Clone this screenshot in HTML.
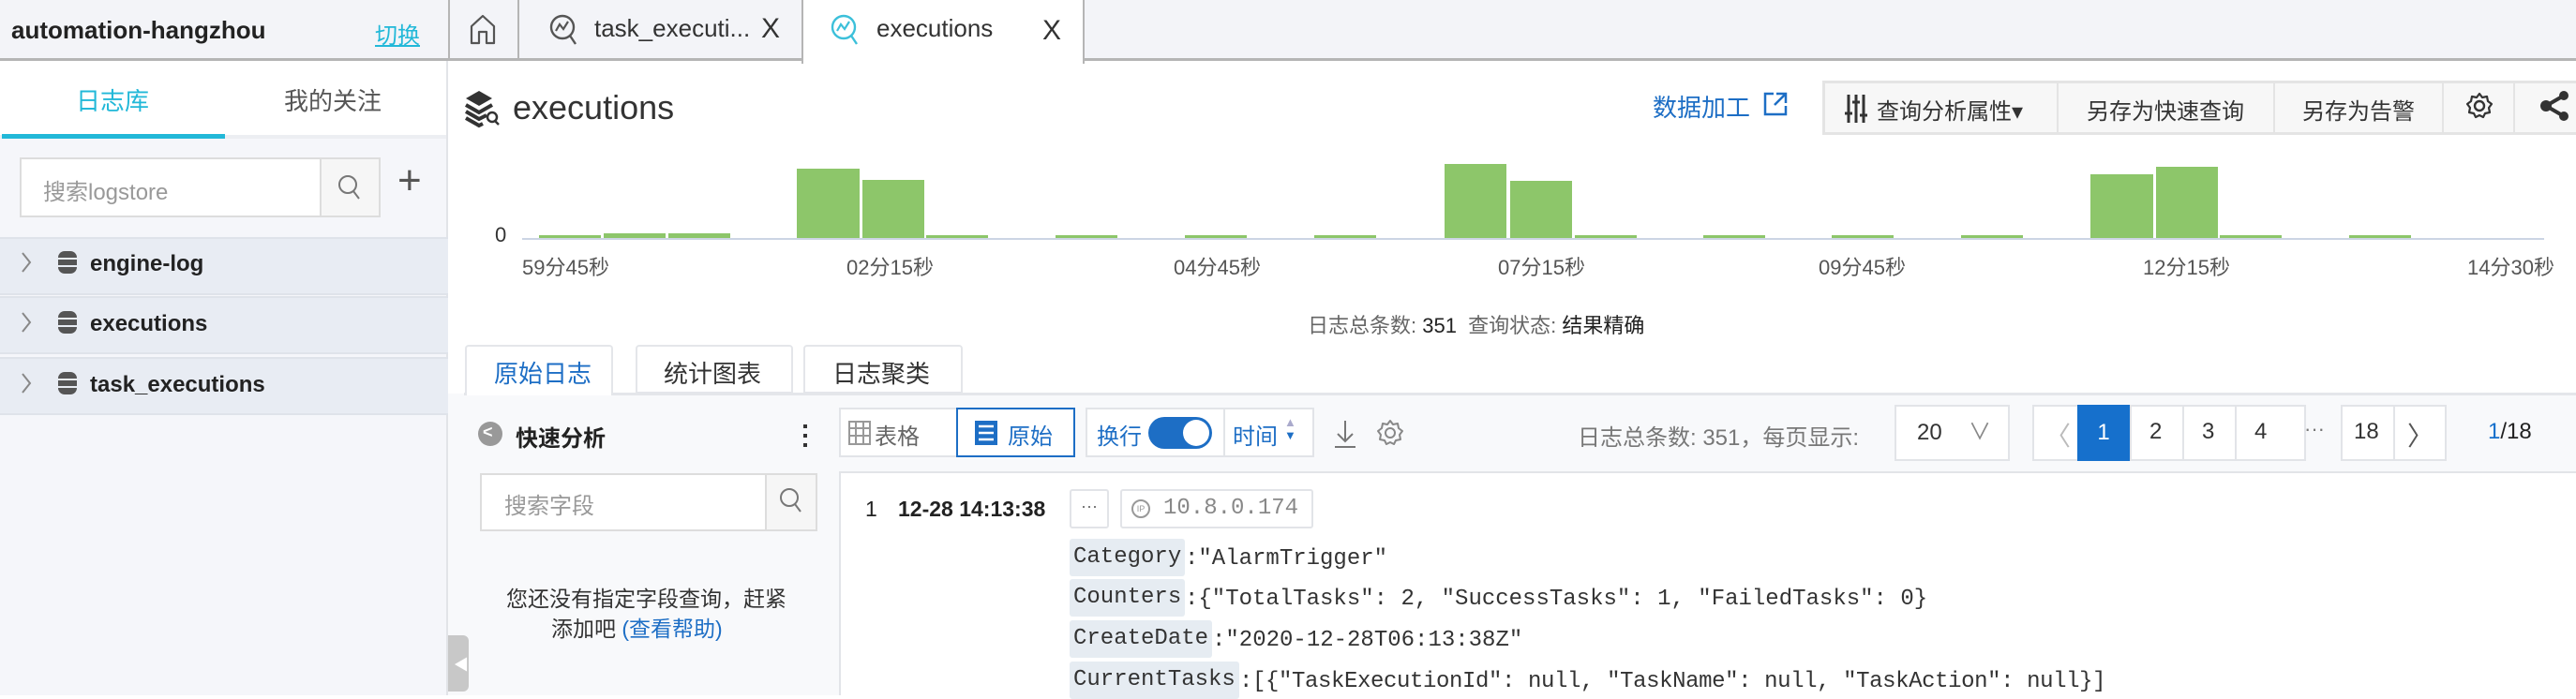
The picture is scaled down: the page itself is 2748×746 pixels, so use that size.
<!DOCTYPE html>
<html><head><meta charset="utf-8"><style>
*{box-sizing:border-box;margin:0;padding:0}
body{width:2748px;height:742px;overflow:hidden;background:#fff;font-family:"Liberation Sans","Noto Sans CJK SC",sans-serif;color:#333;position:relative}
.a{position:absolute}
.t{white-space:nowrap}
.mono{font-family:"Liberation Mono","DejaVu Sans Mono",monospace}
.bar{position:absolute;background:#8dc66a}
.row{position:absolute;left:0;width:478px;height:62px;background:#e8ecf3;border-top:2px solid #dfe3ea;border-bottom:2px solid #dfe3ea;font-size:24px;font-weight:bold;color:#222}
.lbl{position:absolute;left:1141px;height:40px;background:#e6ecf2;border-radius:3px;padding:0 4px;line-height:40px;font-size:24px;color:#333}
.pg{position:absolute;top:432px;height:60px;border:2px solid #e2e4e8;background:#fff;font-size:24px;line-height:56px;text-align:center;color:#333}
</style></head><body>
<!-- top bar -->
<div class="a" style="left:0;top:0;width:2748px;height:65px;background:#f3f4f8;border-bottom:3px solid #b5b5b5"></div>
<div class="a t" style="left:12px;top:17px;font-size:26px;font-weight:bold;color:#222">automation-hangzhou</div>
<div class="a t" style="left:400px;top:18px;font-size:24px;color:#22b8d8;text-decoration:underline">切换</div>
<div class="a" style="left:478px;top:0;width:2px;height:65px;background:#b5b5b5"></div>
<svg class="a" style="left:500px;top:14px" width="30" height="34" viewBox="0 0 30 34"><path d="M3 32V14L15 3l12 11v18h-8V20h-8v12z" fill="none" stroke="#555" stroke-width="2.2" stroke-linejoin="round"/></svg>
<div class="a" style="left:552px;top:0;width:2px;height:65px;background:#b5b5b5"></div>
<svg class="a" style="left:585px;top:14px" width="34" height="38" viewBox="0 0 34 38"><circle cx="15" cy="15" r="12" fill="none" stroke="#555" stroke-width="2.4"/><path d="M8 19l4-7 4 5 5-8" fill="none" stroke="#555" stroke-width="2.2"/><path d="M23 24l6 9" stroke="#555" stroke-width="2.4"/></svg>
<div class="a t" style="left:634px;top:15px;font-size:26px;color:#333">task_executi...</div>
<div class="a t" style="left:812px;top:14px;font-size:30px;color:#333">X</div>
<div class="a" style="left:855px;top:0;width:302px;height:68px;background:#fff;border-left:2px solid #b5b5b5;border-right:2px solid #b5b5b5"></div>
<svg class="a" style="left:885px;top:14px" width="34" height="38" viewBox="0 0 34 38"><circle cx="15" cy="15" r="12" fill="none" stroke="#3cc0da" stroke-width="2.4"/><path d="M8 19l4-7 4 5 5-8" fill="none" stroke="#3cc0da" stroke-width="2.2"/><path d="M23 24l6 9" stroke="#3cc0da" stroke-width="2.4"/></svg>
<div class="a t" style="left:935px;top:15px;font-size:26px;color:#333">executions</div>
<div class="a t" style="left:1112px;top:16px;font-size:30px;color:#333">X</div>
<!-- sidebar -->
<div class="a" style="left:0;top:65px;width:478px;height:677px;background:#f5f6fa;border-right:2px solid #e2e4e8"></div>
<div class="a" style="left:0;top:65px;width:476px;height:83px;background:#fff;border-bottom:4px solid #eceef2"></div>
<div class="a t" style="left:81px;top:88px;font-size:26px;color:#22b8d8">日志库</div>
<div class="a t" style="left:303px;top:88px;font-size:26px;color:#555">我的关注</div>
<div class="a" style="left:2px;top:143px;width:238px;height:5px;background:#22b8d8"></div>
<div class="a" style="left:21px;top:168px;width:385px;height:64px;border:2px solid #ddd;background:#fff"></div>
<div class="a" style="left:341px;top:168px;width:65px;height:64px;border:2px solid #ddd;background:#f6f6f6"></div>
<div class="a t" style="left:46px;top:185px;font-size:24px;color:#999">搜索logstore</div>
<svg class="a" style="left:358px;top:184px" width="30" height="32" viewBox="0 0 30 32"><circle cx="13" cy="13" r="9" fill="none" stroke="#777" stroke-width="2"/><path d="M19 20l6 8" stroke="#777" stroke-width="2"/></svg>
<div class="a t" style="left:424px;top:168px;font-size:44px;color:#555;font-weight:300">+</div>
<div class="row" style="top:253px"></div>
<div class="row" style="top:316px"></div>
<div class="row" style="top:381px"></div>
<div class="a t" style="left:96px;top:268px;font-size:24px;font-weight:bold;color:#222">engine-log</div>
<div class="a t" style="left:96px;top:332px;font-size:24px;font-weight:bold;color:#222">executions</div>
<div class="a t" style="left:96px;top:397px;font-size:24px;font-weight:bold;color:#222">task_executions</div>
<svg class="a" style="left:20px;top:268px" width="80" height="160" viewBox="0 0 80 160">
<g fill="none" stroke="#888" stroke-width="2"><path d="M4 2l8 10-8 10"/><path d="M4 66l8 10-8 10"/><path d="M4 131l8 10-8 10"/></g>
<g fill="#555"><rect x="42" y="0" width="20" height="24" rx="7"/><rect x="42" y="64" width="20" height="24" rx="7"/><rect x="42" y="129" width="20" height="24" rx="7"/></g>
<g stroke="#e8ecf3" stroke-width="2"><path d="M42 8h20M42 16h20M42 72h20M42 80h20M42 137h20M42 145h20"/></g></svg>
<!-- main header -->
<svg class="a" style="left:495px;top:95px" width="40" height="42" viewBox="0 0 40 42"><path d="M16 2l14 8-14 8-14-8z" fill="#333"/><path d="M2 17l14 8 14-8M2 24l14 8 8-4M2 31l14 8 4-2" fill="none" stroke="#333" stroke-width="4"/><circle cx="30" cy="30" r="5" fill="none" stroke="#333" stroke-width="2.5"/><path d="M33 34l4 4" stroke="#333" stroke-width="2.5"/></svg>
<div class="a t" style="left:547px;top:94px;font-size:36px;color:#333">executions</div>
<div class="a t" style="left:1763px;top:95px;font-size:26px;color:#1d6ec5">数据加工</div>
<svg class="a" style="left:1880px;top:97px" width="28" height="28" viewBox="0 0 28 28"><path d="M12 3H3v22h22v-9" fill="none" stroke="#1d6ec5" stroke-width="2.5"/><path d="M15 3h10v10M25 3L13 15" fill="none" stroke="#1d6ec5" stroke-width="2.5"/></svg>
<div class="a" style="left:1944px;top:86px;width:810px;height:58px;border:3px solid #e4e4e4;background:#f7f7f7"></div>
<div class="a" style="left:2194px;top:86px;width:2px;height:58px;background:#e4e4e4"></div>
<div class="a" style="left:2425px;top:86px;width:2px;height:58px;background:#e4e4e4"></div>
<div class="a" style="left:2605px;top:86px;width:2px;height:58px;background:#e4e4e4"></div>
<div class="a" style="left:2681px;top:86px;width:2px;height:58px;background:#e4e4e4"></div>
<svg class="a" style="left:1968px;top:99px" width="24" height="34" viewBox="0 0 24 34"><g stroke="#333" stroke-width="3"><path d="M4 2v30M12 2v30M20 2v30"/><path d="M0 22h8M8 10h8M16 24h8"/></g></svg>
<div class="a t" style="left:2002px;top:99px;font-size:24px;color:#333">查询分析属性▾</div>
<div class="a t" style="left:2226px;top:99px;font-size:24px;color:#333">另存为快速查询</div>
<div class="a t" style="left:2456px;top:99px;font-size:24px;color:#333">另存为告警</div>
<svg class="a" style="left:2630px;top:98px" width="30" height="30" viewBox="0 0 30 30"><circle cx="15" cy="15" r="5" fill="none" stroke="#333" stroke-width="2.4"/><path d="M15 2l3 4 5-1 1 5 4 3-3 4 1 5-5 1-2 4-4-2-4 2-2-4-5-1 1-5-3-4 4-3 1-5 5 1z" fill="none" stroke="#333" stroke-width="2.2" stroke-linejoin="round"/></svg>
<svg class="a" style="left:2708px;top:96px" width="34" height="34" viewBox="0 0 34 34"><circle cx="27" cy="6" r="5" fill="#333"/><circle cx="8" cy="17" r="6" fill="#333"/><circle cx="27" cy="28" r="5" fill="#333"/><path d="M27 6L8 17l19 11" fill="none" stroke="#333" stroke-width="4"/></svg>
<!-- chart -->
<div class="a t" style="left:528px;top:238px;font-size:22px;color:#333">0</div>
<div class="a" style="left:557px;top:254px;width:2157px;height:2px;background:#ccd5e4"></div>
<div class="bar" style="left:575px;top:251px;width:66px;height:3px"></div>
<div class="bar" style="left:644px;top:249px;width:66px;height:5px"></div>
<div class="bar" style="left:713px;top:249px;width:66px;height:5px"></div>
<div class="bar" style="left:850px;top:180px;width:67px;height:74px"></div>
<div class="bar" style="left:920px;top:192px;width:66px;height:62px"></div>
<div class="bar" style="left:988px;top:251px;width:66px;height:3px"></div>
<div class="bar" style="left:1126px;top:251px;width:66px;height:3px"></div>
<div class="bar" style="left:1264px;top:251px;width:66px;height:3px"></div>
<div class="bar" style="left:1402px;top:251px;width:66px;height:3px"></div>
<div class="bar" style="left:1541px;top:175px;width:66px;height:79px"></div>
<div class="bar" style="left:1611px;top:193px;width:66px;height:61px"></div>
<div class="bar" style="left:1680px;top:251px;width:66px;height:3px"></div>
<div class="bar" style="left:1817px;top:251px;width:66px;height:3px"></div>
<div class="bar" style="left:1954px;top:251px;width:66px;height:3px"></div>
<div class="bar" style="left:2092px;top:251px;width:66px;height:3px"></div>
<div class="bar" style="left:2230px;top:186px;width:67px;height:68px"></div>
<div class="bar" style="left:2300px;top:178px;width:66px;height:76px"></div>
<div class="bar" style="left:2368px;top:251px;width:66px;height:3px"></div>
<div class="bar" style="left:2506px;top:251px;width:66px;height:3px"></div>
<div class="a t" style="left:557px;top:268px;font-size:22px;color:#555">59分45秒</div>
<div class="a t" style="left:903px;top:268px;font-size:22px;color:#555">02分15秒</div>
<div class="a t" style="left:1252px;top:268px;font-size:22px;color:#555">04分45秒</div>
<div class="a t" style="left:1598px;top:268px;font-size:22px;color:#555">07分15秒</div>
<div class="a t" style="left:1940px;top:268px;font-size:22px;color:#555">09分45秒</div>
<div class="a t" style="left:2286px;top:268px;font-size:22px;color:#555">12分15秒</div>
<div class="a t" style="left:2632px;top:268px;font-size:22px;color:#555">14分30秒</div>
<div class="a t" style="left:1395px;top:330px;font-size:22px;color:#666">日志总条数: <span style="color:#222">351</span>&nbsp; 查询状态: <span style="color:#222">结果精确</span></div>
<!-- tabs -->
<div class="a" style="left:478px;top:420px;width:2270px;height:322px;background:#f8f9fb"></div>
<div class="a" style="left:495px;top:419px;width:2253px;height:3px;background:#e4e6ea"></div>
<div class="a" style="left:496px;top:368px;width:158px;height:54px;background:#fff;border:2px solid #e4e6ea;border-bottom:none;border-radius:4px 4px 0 0"></div>
<div class="a" style="left:678px;top:368px;width:168px;height:52px;background:#fff;border:2px solid #e4e6ea;border-radius:4px 4px 0 0"></div>
<div class="a" style="left:857px;top:368px;width:170px;height:52px;background:#fff;border:2px solid #e4e6ea;border-radius:4px 4px 0 0"></div>
<div class="a t" style="left:527px;top:379px;font-size:26px;color:#1d6ec5">原始日志</div>
<div class="a t" style="left:708px;top:379px;font-size:26px;color:#333">统计图表</div>
<div class="a t" style="left:888px;top:379px;font-size:26px;color:#333">日志聚类</div>
<!-- quick analysis -->
<div class="a" style="left:478px;top:678px;width:22px;height:60px;background:#c8c8c8;border-radius:0 6px 6px 0"></div>
<div class="a t" style="left:484px;top:696px;font-size:16px;color:#fff">◀</div>
<div class="a" style="left:510px;top:450px;width:26px;height:26px;border-radius:50%;background:#999"></div>
<div class="a t" style="left:515px;top:451px;font-size:18px;color:#fff;font-weight:bold">&lt;</div>
<div class="a t" style="left:550px;top:448px;font-size:24px;font-weight:bold;color:#222">快速分析</div>
<div class="a" style="left:857px;top:453px;width:4px;height:4px;background:#333;box-shadow:0 10px #333,0 20px #333"></div>
<div class="a" style="left:512px;top:505px;width:360px;height:62px;border:2px solid #ddd;background:#fff"></div>
<div class="a" style="left:816px;top:505px;width:56px;height:62px;border:2px solid #ddd;background:#f6f6f6"></div>
<div class="a t" style="left:538px;top:520px;font-size:24px;color:#999">搜索字段</div>
<svg class="a" style="left:829px;top:518px" width="30" height="32" viewBox="0 0 30 32"><circle cx="13" cy="13" r="9" fill="none" stroke="#777" stroke-width="2"/><path d="M19 20l6 8" stroke="#777" stroke-width="2"/></svg>
<div class="a t" style="left:540px;top:620px;font-size:23px;color:#333">您还没有指定字段查询，赶紧</div>
<div class="a t" style="left:588px;top:652px;font-size:23px;color:#333">添加吧 <span style="color:#1d6ec5">(查看帮助)</span></div>
<!-- toolbar -->
<div class="a" style="left:895px;top:435px;width:252px;height:53px;border:2px solid #e2e4e8;background:#fff"></div>
<div class="a" style="left:1020px;top:435px;width:127px;height:53px;border:2px solid #1d6ec5;background:#fff"></div>
<svg class="a" style="left:905px;top:449px" width="24" height="26" viewBox="0 0 24 26"><rect x="1" y="1" width="22" height="24" fill="none" stroke="#999" stroke-width="2"/><path d="M1 8h22M1 16h22M8 1v24M16 1v24" stroke="#999" stroke-width="2"/></svg>
<div class="a t" style="left:933px;top:446px;font-size:24px;color:#666">表格</div>
<svg class="a" style="left:1040px;top:449px" width="24" height="26" viewBox="0 0 24 26"><rect width="24" height="26" fill="#1d6ec5"/><path d="M4 6h16M4 13h16M4 20h16" stroke="#fff" stroke-width="2.5"/></svg>
<div class="a t" style="left:1075px;top:446px;font-size:24px;color:#1d6ec5">原始</div>
<div class="a" style="left:1158px;top:435px;width:244px;height:53px;border:2px solid #e2e4e8;background:#fff"></div>
<div class="a" style="left:1305px;top:435px;width:2px;height:53px;background:#e2e4e8"></div>
<div class="a t" style="left:1170px;top:446px;font-size:24px;color:#1d6ec5">换行</div>
<div class="a" style="left:1225px;top:445px;width:68px;height:34px;border-radius:17px;background:#1d6ec5"></div>
<div class="a" style="left:1262px;top:448px;width:28px;height:28px;border-radius:50%;background:#fff"></div>
<div class="a t" style="left:1315px;top:446px;font-size:24px;color:#1d6ec5">时间</div>
<div class="a t" style="left:1370px;top:444px;font-size:13px;line-height:14px;color:#1d6ec5"><span style="color:#aac">▲</span><br>▼</div>
<svg class="a" style="left:1422px;top:447px" width="26" height="32" viewBox="0 0 26 32"><path d="M13 2v22M5 16l8 8 8-8M2 30h22" fill="none" stroke="#777" stroke-width="2"/></svg>
<svg class="a" style="left:1468px;top:447px" width="30" height="30" viewBox="0 0 30 30"><circle cx="15" cy="15" r="5" fill="none" stroke="#888" stroke-width="2"/><path d="M15 2l3 4 5-1 1 5 4 3-3 4 1 5-5 1-2 4-4-2-4 2-2-4-5-1 1-5-3-4 4-3 1-5 5 1z" fill="none" stroke="#888" stroke-width="2" stroke-linejoin="round"/></svg>
<div class="a t" style="left:1683px;top:447px;font-size:24px;color:#777">日志总条数: 351，每页显示:</div>
<div class="pg" style="left:2021px;width:123px;text-align:left;padding-left:22px">20<span style="position:absolute;right:18px;color:#888">∨</span></div>
<div class="pg" style="left:2168px;width:292px"></div>
<div class="a" style="left:2216px;top:432px;width:2px;height:60px;background:#e2e4e8"></div>
<div class="a" style="left:2272px;top:432px;width:2px;height:60px;background:#e2e4e8"></div>
<div class="a" style="left:2328px;top:432px;width:2px;height:60px;background:#e2e4e8"></div>
<div class="a" style="left:2384px;top:432px;width:2px;height:60px;background:#e2e4e8"></div>
<div class="a" style="left:2216px;top:432px;width:56px;height:60px;background:#1670cc;color:#fff;font-size:24px;line-height:60px;text-align:center">1</div>
<div class="a t" style="left:2181px;top:444px;font-size:28px;color:#bbb">〈</div>
<div class="a t" style="left:2293px;top:447px;font-size:24px">2</div>
<div class="a t" style="left:2349px;top:447px;font-size:24px">3</div>
<div class="a t" style="left:2405px;top:447px;font-size:24px">4</div>
<div class="a t" style="left:2458px;top:445px;font-size:22px;color:#777">···</div>
<div class="pg" style="left:2497px;width:113px"></div>
<div class="a" style="left:2553px;top:432px;width:2px;height:60px;background:#e2e4e8"></div>
<div class="a t" style="left:2511px;top:447px;font-size:24px">18</div>
<div class="a t" style="left:2568px;top:444px;font-size:28px;color:#555">〉</div>
<div class="a t" style="left:2654px;top:447px;font-size:24px;color:#222"><span style="color:#1670cc">1</span>/18</div>
<!-- log -->
<div class="a" style="left:895px;top:503px;width:1853px;height:239px;background:#fff;border:2px solid #e2e4e8;border-right:none;border-bottom:none"></div>
<div class="a t" style="left:923px;top:530px;font-size:23px;color:#222">1</div>
<div class="a t" style="left:958px;top:530px;font-size:23px;font-weight:bold;color:#222">12-28 14:13:38</div>
<div class="a" style="left:1141px;top:522px;width:42px;height:42px;border:2px solid #e2e4e8;border-radius:3px;text-align:center;font-size:18px;line-height:32px;color:#666">···</div>
<div class="a" style="left:1195px;top:522px;width:206px;height:42px;border:2px solid #e2e4e8;border-radius:3px"></div>
<div class="a" style="left:1207px;top:533px;width:20px;height:20px;border:2px solid #999;border-radius:50%;font-size:9px;line-height:16px;text-align:center;color:#999">IP</div>
<div class="a t mono" style="left:1241px;top:529px;font-size:24px;color:#888">10.8.0.174</div>
<div class="lbl mono" style="top:575px">Category</div>
<div class="a t mono" style="left:1264px;top:583px;font-size:24px;color:#333">:"AlarmTrigger"</div>
<div class="lbl mono" style="top:618px">Counters</div>
<div class="a t mono" style="left:1264px;top:626px;font-size:24px;color:#333">:{"TotalTasks": 2, "SuccessTasks": 1, "FailedTasks": 0}</div>
<div class="lbl mono" style="top:662px">CreateDate</div>
<div class="a t mono" style="left:1293px;top:670px;font-size:24px;color:#333">:"2020-12-28T06:13:38Z"</div>
<div class="lbl mono" style="top:706px">CurrentTasks</div>
<div class="a t mono" style="left:1322px;top:714px;font-size:24px;color:#333;letter-spacing:-0.4px">:[{"TaskExecutionId": null, "TaskName": null, "TaskAction": null}]</div>
</body></html>
